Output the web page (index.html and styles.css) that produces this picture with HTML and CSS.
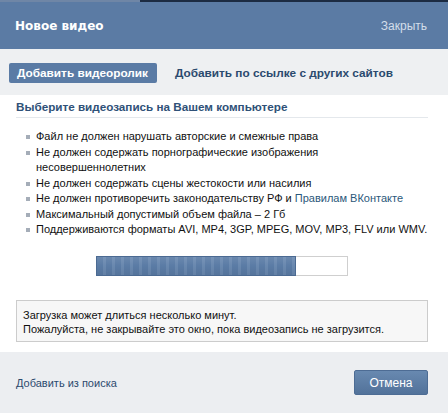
FILE: index.html
```html
<!DOCTYPE html>
<html lang="ru">
<head>
<meta charset="utf-8">
<title>Новое видео</title>
<link rel="stylesheet" href="styles.css">
</head>
<body>
<div class="topline"><span class="tl-left"></span><span class="tl-right"></span></div>
<header class="hd">
  <span class="hd-title">Новое видео</span>
  <a class="hd-close">Закрыть</a>
</header>
<nav class="tabs">
  <a class="tab tab-active">Добавить видеоролик</a>
  <a class="tab">Добавить по ссылке с других сайтов</a>
</nav>
<main class="content">
  <h2 class="sec-title">Выберите видеозапись на Вашем компьютере</h2>
  <ul class="rules">
    <li>Файл не должен нарушать авторские и смежные права</li>
    <li>Не должен содержать порнографические изображения несовершеннолетних</li>
    <li>Не должен содержать сцены жестокости или насилия</li>
    <li>Не должен противоречить законодательству РФ и <a class="link">Правилам ВКонтакте</a></li>
    <li>Максимальный допустимый объем файла – 2 Гб</li>
    <li>Поддерживаются форматы AVI, MP4, 3GP, MPEG, MOV, MP3, FLV или WMV.</li>
  </ul>
  <div class="progress"><div class="progress-fill" style="width:80%"></div></div>
  <div class="notice">
    Загрузка может длиться несколько минут.<br>
    Пожалуйста, не закрывайте это окно, пока видеозапись не загрузится.
  </div>
</main>
<footer class="ft">
  <a class="ft-link">Добавить из поиска</a>
  <button class="btn-cancel">Отмена</button>
</footer>
</body>
</html>
```
FILE: styles.css
```css
* { box-sizing: border-box; }
html, body { margin: 0; padding: 0; }
body {
  width: 448px;
  height: 413px;
  overflow: hidden;
  font-family: "Liberation Sans", Arial, sans-serif;
  font-size: 11px;
  color: #000;
  background: #fff;
}
a { cursor: pointer; }

.topline { display: flex; height: 2px; }
.tl-left { width: 140px; background: #6f86a6; }
.tl-right { flex: 1; background: #1c2b42; }

.hd {
  height: 47px;
  background: #5b7ba4;
  display: flex;
  align-items: center;
  justify-content: space-between;
  padding: 0 21px 0 15px;
}
.hd-title {
  color: #fff;
  font-family: "DejaVu Sans", sans-serif;
  font-weight: bold;
  font-size: 12px;
}
.hd-close {
  color: #d3deea;
  font-size: 12px;
}

.tabs {
  height: 46px;
  background: #eef0f2;
  display: flex;
  align-items: flex-start;
  padding: 14px 0 0 9px;
  gap: 10px;
}
.tab {
  height: 20px;
  line-height: 20px;
  padding: 0 9px 0 8px;
  font-weight: bold;
  font-size: 11.8px;
  color: #2b4a6e;
}
.tab-active {
  background: #5a7ba5;
  color: #fff;
  border-radius: 2px;
}

.content {
  height: 257px;
  padding: 5px 20px 0 16px;
}
.sec-title {
  margin: 0;
  font-size: 11.7px;
  font-weight: bold;
  line-height: 14px;
  color: #2f5178;
  padding-bottom: 3px;
  border-bottom: 1px solid #e4e8ec;
}
.rules {
  list-style: none;
  margin: 11px 0 0;
  padding: 0 0 0 20px;
  line-height: 15.5px;
  color: #111;
}
.rules li { position: relative; }
.rules li::before {
  content: "";
  position: absolute;
  left: -10px;
  top: 6px;
  width: 4px;
  height: 4px;
  background: #a5adb8;
}
.link { color: #2b587a; }

.progress {
  width: 252px;
  height: 20px;
  margin: 18px auto 0;
  border: 1px solid #cfcfcf;
  background: #fff;
}
.progress-fill {
  height: 20px;
  margin: -1px 0 0 -1px;
  border: 1px solid #4b6a92;
  background:
    linear-gradient(to bottom, rgba(255,255,255,0.10), rgba(255,255,255,0) 50%, rgba(0,0,0,0.06)),
    repeating-linear-gradient(to right, #5a7ba5 0, #5a7ba5 6px, #6988af 6px, #6988af 9px);
}

.notice {
  margin-top: 24px;
  border: 1px solid #cccccc;
  background: #f7f7f7;
  padding: 7px 6px 4px;
  line-height: 14.5px;
  color: #111;
}

.ft {
  height: 61px;
  background: #eceef1;
  display: flex;
  align-items: center;
  justify-content: space-between;
  padding: 0 20px 0 16px;
}
.ft-link { color: #2b4a6e; }
.btn-cancel {
  width: 74px;
  height: 25px;
  border: 1px solid #4d6c94;
  border-radius: 2px;
  background: linear-gradient(#6889b0, #52729a);
  color: #fff;
  font-family: inherit;
  font-size: 12px;
  padding: 0;
}
```
